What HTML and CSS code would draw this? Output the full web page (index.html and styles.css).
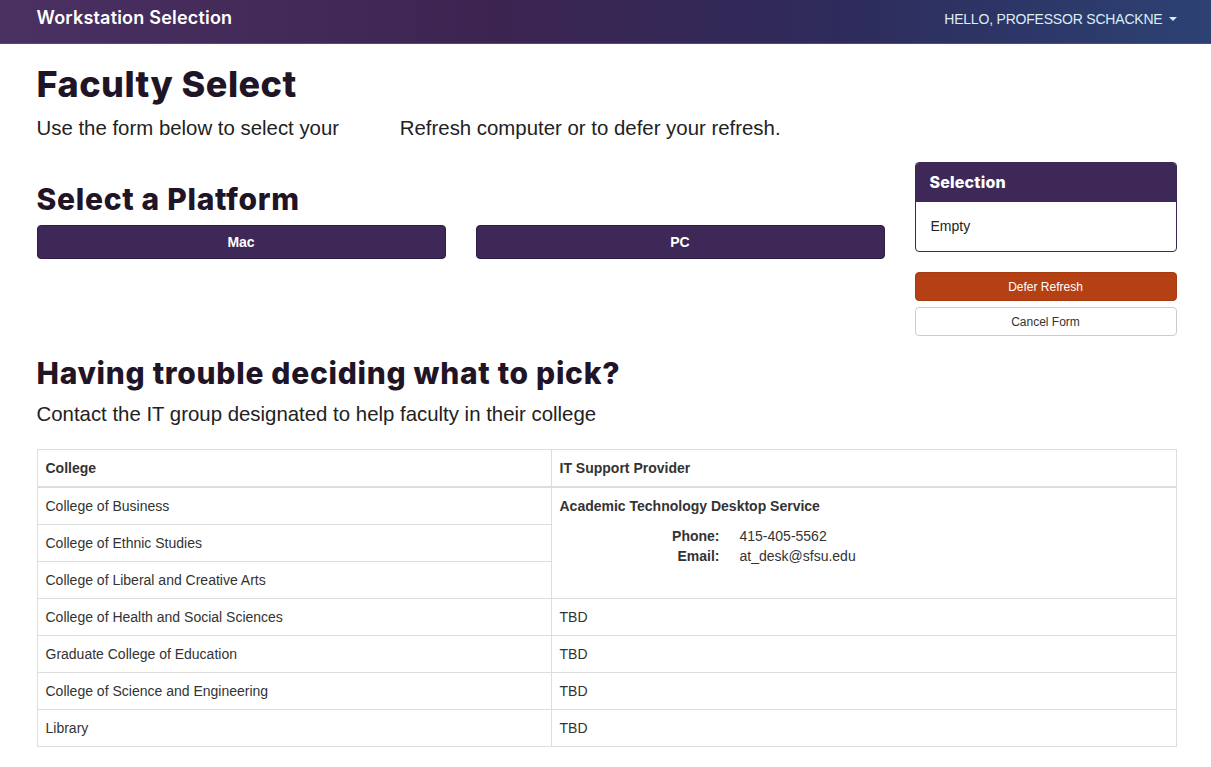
FILE: index.html
```html
<!DOCTYPE html>
<html lang="en">
<head>
<meta charset="utf-8">
<title>Workstation Selection</title>
<link rel="stylesheet" href="styles.css">
</head>
<body>
<nav class="navbar">
  <div class="container nav-inner">
    <a class="brand" href="#">Workstation Selection</a>
    <a class="user" href="#">HELLO, PROFESSOR SCHACKNE <span class="caret"></span></a>
  </div>
</nav>
<main class="container">
  <h1 class="page-title">Faculty Select</h1>
  <p class="lead">Use the form below to select your <span class="gap"></span>Refresh computer or to defer your refresh.</p>

  <div class="row">
    <section class="main-col">
      <h2 class="section-title">Select a Platform</h2>
      <div class="platforms">
        <button class="btn btn-purple">Mac</button>
        <button class="btn btn-purple">PC</button>
      </div>
    </section>
    <aside class="side-col">
      <div class="panel">
        <div class="panel-heading">Selection</div>
        <div class="panel-body">Empty</div>
      </div>
      <button class="btn btn-orange">Defer Refresh</button>
      <button class="btn btn-default">Cancel Form</button>
    </aside>
  </div>

  <h2 class="section-title trouble">Having trouble deciding what to pick?</h2>
  <p class="lead lead2">Contact the IT group designated to help faculty in their college</p>

  <table class="table">
    <thead>
      <tr><th class="c1">College</th><th>IT Support Provider</th></tr>
    </thead>
    <tbody>
      <tr>
        <td>College of Business</td>
        <td rowspan="3" class="provider">
          <div class="provider-name">Academic Technology Desktop Service</div>
          <dl class="dl-horizontal">
            <dt>Phone:</dt><dd>415-405-5562</dd>
            <dt>Email:</dt><dd>at_desk@sfsu.edu</dd>
          </dl>
        </td>
      </tr>
      <tr><td>College of Ethnic Studies</td></tr>
      <tr><td>College of Liberal and Creative Arts</td></tr>
      <tr><td>College of Health and Social Sciences</td><td>TBD</td></tr>
      <tr><td>Graduate College of Education</td><td>TBD</td></tr>
      <tr><td>College of Science and Engineering</td><td>TBD</td></tr>
      <tr><td>Library</td><td>TBD</td></tr>
    </tbody>
  </table>
</main>
</body>
</html>
```
FILE: styles.css
```css
* { box-sizing: border-box; }
html, body { margin: 0; padding: 0; }
body {
  font-family: "Liberation Sans", Arial, sans-serif;
  font-size: 14px;
  line-height: 20px;
  color: #333;
  background: #fff;
}
.container {
  width: 1142px;
  padding-left: 2px;
  margin: 0 auto;
}
.navbar {
  height: 44px;
  background: linear-gradient(to right, #4b3162 0%, #3d2451 40%, #2e2c5c 70%, #2c4273 100%);
  border-bottom: 1px solid #6b3f7c;
}
.nav-inner {
  display: flex;
  justify-content: space-between;
  align-items: center;
  height: 36px;
}
.brand {
  font-family: Inter, "Noto Sans", sans-serif;
  font-weight: 600;
  font-size: 18px;
  color: #fff;
  text-decoration: none;
  letter-spacing: 0.2px;
}
.user {
  color: #d9eef7;
  font-size: 14px;
  letter-spacing: -0.2px;
  text-decoration: none;
  display: flex;
  align-items: center;
  gap: 4px;
  margin-top: 1px;
}
.caret {
  display: inline-block;
  width: 0; height: 0;
  border-left: 4px solid transparent;
  border-right: 4px solid transparent;
  border-top: 4px solid #d9eef7;
  margin-left: 2px;
}
.page-title {
  font-family: Inter, "Noto Sans", sans-serif;
  font-weight: 800;
  font-size: 36px;
  line-height: 40px;
  color: #1f1527;
  margin: 20px 0 0;
  letter-spacing: 0.45px;
}
.lead {
  font-size: 20.4px;
  line-height: 28px;
  color: #222;
  margin: 10px 0 0;
}
.gap { display: inline-block; width: 55px; }
.row {
  display: flex;
  gap: 30px;
  margin-top: 20px;
}
.main-col { flex: 0 0 848px; }
.side-col { flex: 1 1 auto; display: flex; flex-direction: column; }
.section-title {
  font-family: Inter, "Noto Sans", sans-serif;
  font-weight: 800;
  font-size: 30px;
  line-height: 34px;
  color: #1f1527;
  margin: 20px 0 9px;
  letter-spacing: 0.7px;
}
.platforms {
  display: flex;
  gap: 30px;
}
.btn {
  display: block;
  width: 100%;
  font-family: "Liberation Sans", Arial, sans-serif;
  border-radius: 4px;
  cursor: pointer;
  text-align: center;
}
.btn-purple {
  flex: 1 1 0;
  height: 34px;
  background: #3e2857;
  border: 1px solid #2f1e44;
  color: #fff;
  font-weight: bold;
  font-size: 14px;
}
.panel {
  border: 1px solid #3e2857;
  border-radius: 4px;
  overflow: hidden;
}
.panel-heading {
  background: #3e2857;
  color: #fff;
  font-family: Inter, "Noto Sans", sans-serif;
  font-weight: 800;
  font-size: 16px;
  letter-spacing: 0.2px;
  height: 39px;
  line-height: 38px;
  padding: 0 14px;
}
.panel-body {
  padding: 15px 15px 15px;
  height: 49px;
  font-size: 14px;
  line-height: 18px;
  color: #222;
}
.btn-orange {
  margin-top: 20px;
  height: 29px;
  background: #b44013;
  border: 1px solid #a63a10;
  color: #fff;
  font-size: 12px;
}
.btn-default {
  margin-top: 6px;
  height: 29px;
  background: #fff;
  border: 1px solid #ccc;
  color: #333;
  font-size: 12px;
}
.trouble { margin-top: 20px; margin-bottom: 0; }
.lead2 { margin-top: 10px; }
.table {
  width: 100%;
  border-collapse: collapse;
  margin-top: 21px;
  border: 1px solid #ddd;
}
.table th, .table td {
  border: 1px solid #ddd;
  padding: 8px;
  text-align: left;
  vertical-align: top;
  line-height: 20px;
}
.table th { font-weight: bold; border-bottom: 2px solid #ddd; }
.table .c1 { width: 514px; }
.provider-name { font-weight: bold; }
.dl-horizontal {
  margin: 10px 0 0;
  display: grid;
  grid-template-columns: 160px 1fr;
  column-gap: 20px;
}
.dl-horizontal dt { font-weight: bold; text-align: right; }
.dl-horizontal dd { margin: 0; }
```
